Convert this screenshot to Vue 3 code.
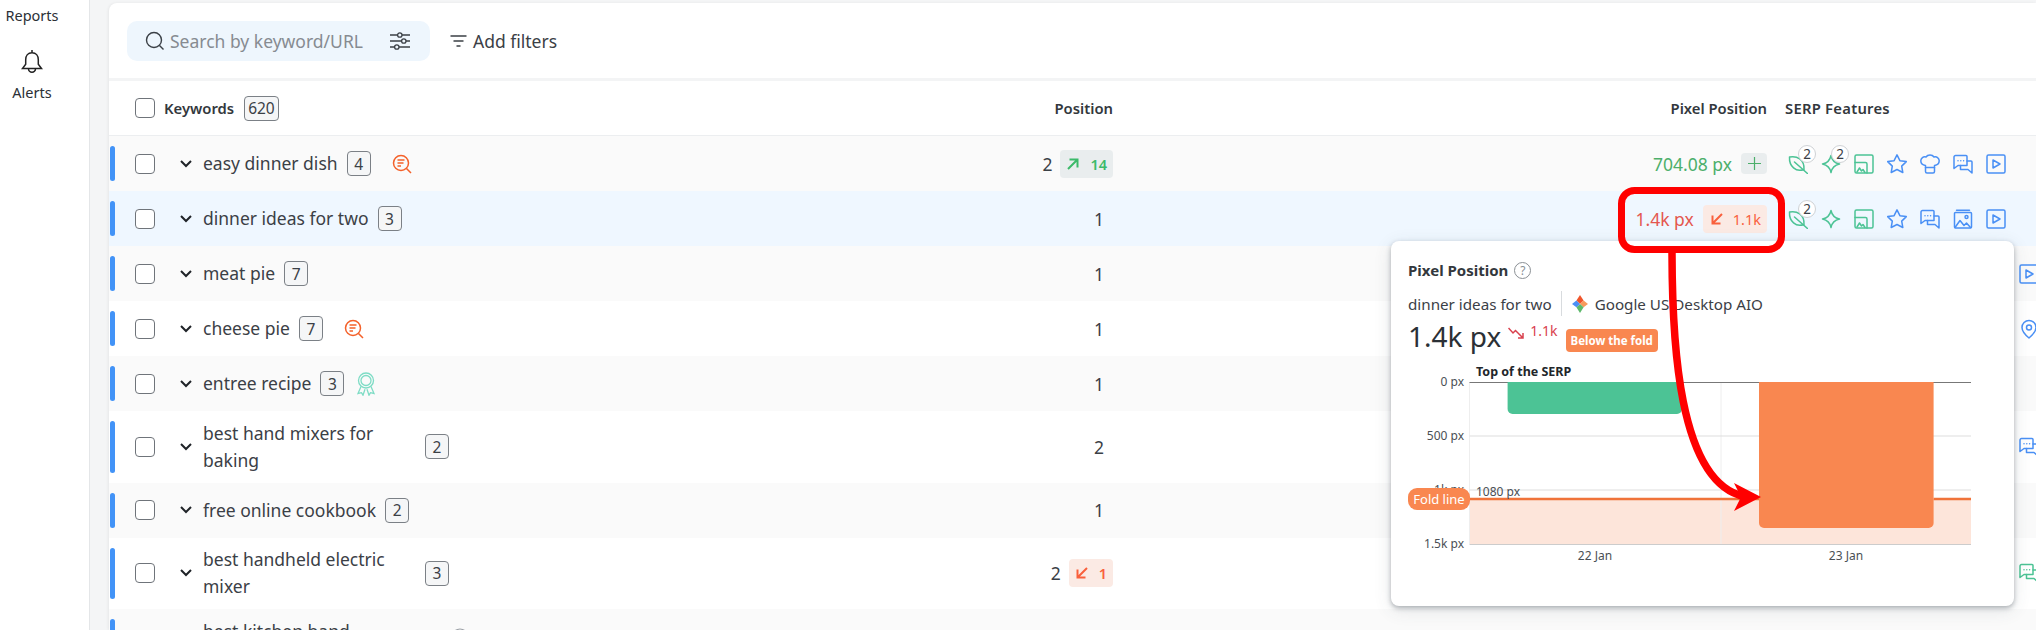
<script setup>
const box = 'M2.5 1h15A1.5 1.5 0 0 1 19 2.5v15a1.5 1.5 0 0 1-1.5 1.5h-15A1.5 1.5 0 0 1 1 17.5v-15A1.5 1.5 0 0 1 2.5 1z'

const icons = {
    leaf: ['M1.500 3C9 1.500 16.500 5.500 16 15.500 8 18.500 1 12.500 1.500 3z', 'M6.500 8L19.500 19.500'],
    spark: ['M10 1.500C11 6.500 13.500 9 18.500 10 13.500 11 11 13.500 10 18.500 9 13.500 6.500 11 1.500 10 6.500 9 9 6.500 10 1.500z'],
    image: [box, 'M1 8.500h10.500A1.500 1.500 0 0 1 13 10v9', 'M3 18l2.500-4 2 3 1.500-1.500 2 3'],
    star: ['M10 .8l2.900 5.900 6.400.9-4.600 4.500 1.100 6.400L10 15.500l-5.800 3 1.100-6.400L.7 7.600l6.400-.9z'],
    hat: [
        'M5.500 13.500v-2C2.500 11 .8 9 .8 6.800c0-2.800 2.600-4.600 5.200-3.800C6.900 1.600 8.300 1 10 1s3.100.6 4 2c2.600-.8 5.200 1 5.200 3.800 0 2.200-1.700 4.200-4.700 4.700v2z',
        'M5.500 13.500v4a1.500 1.500 0 0 0 1.500 1.500h6a1.500 1.500 0 0 0 1.500-1.500v-4',
    ],
    chat: [
        'M2.500 1.500h10.500a1 1 0 0 1 1 1v9H5L1 14.500V3a1.500 1.500 0 0 1 1.500-1.500z',
        'M14 7h4a1 1 0 0 1 1 1v11l-4-3.500H7.500v-4',
        'M5 6.800h.01M7.800 6.800h.01M10.600 6.800h.01',
    ],
    picture: [
        'M3.500 1.200h13',
        'M2.500 3.500h15a1 1 0 0 1 1 1V18a1 1 0 0 1-1 1h-15a1 1 0 0 1-1-1V4.500a1 1 0 0 1 1-1z',
        'M2 18.500l5-7 4 5 2.500-2.500 4 4.500',
        'M15 8a1.500 1.500 0 1 1-3 0 1.500 1.500 0 0 1 3 0z',
    ],
    play: [box, 'M7 6l7 4-7 4z'],
    pin: [
        'M10 1.500a7 7 0 0 1 7 7c0 4-4 8-7 10.500-3-2.500-7-6.500-7-10.500a7 7 0 0 1 7-7z',
        'M12.500 8.500a2.500 2.500 0 1 1-5 0 2.500 2.500 0 0 1 5 0z',
    ],
}

const greenIcons = ['leaf', 'spark', 'image']
const base = ['leaf', 'spark', 'image', 'star', 'chat', 'picture', 'play']

const rows = [
    {
        name: 'easy dinner dish', count: 4, pos: 2, note: 'search',
        delta: { dir: 'up', text: '14' },
        pixel: { text: '704.08 px', good: true },
        serp: ['leaf', 'spark', 'image', 'star', 'hat', 'chat', 'play'],
        badges: ['leaf', 'spark'],
    },
    {
        name: 'dinner ideas for two', count: 3, pos: 1, active: true,
        pixel: { text: '1.4k px', change: '1.1k' },
        serp: base, badges: ['leaf'],
    },
    { name: 'meat pie', count: 7, pos: 1, serp: [...base, 'play'] },
    { name: 'cheese pie', count: 7, pos: 1, note: 'search', serp: [...base, 'pin'] },
    { name: 'entree recipe', count: 3, pos: 1, note: 'ribbon', serp: [] },
    { name: 'best hand mixers for baking', count: 2, pos: 2, serp: [...base, 'chat'] },
    { name: 'free online cookbook', count: 2, pos: 1, serp: [] },
    {
        name: 'best handheld electric mixer', count: 3, pos: 2,
        delta: { dir: 'down', text: '1' },
        serp: [...base, 'chat'], greenLast: true,
    },
    { name: 'best kitchen hand\nmixer', count: 3, pos: 1, note: 'ring', fullWidth: true, serp: [] },
]

function iconColor(row, name, index) {
    if (greenIcons.includes(name)) return 'green'
    if (row.greenLast && index === 7) return 'green'
    return 'blue'
}
</script>

<template>
    <div class="page">
        <aside class="sidebar">
            <div class="nav-label reports">Reports</div>
            <svg class="bell" width="24" height="26" viewBox="0 0 24 26" fill="none" stroke="#222" stroke-width="1.500">
                <path d="M12 1v2.700M12 3.700c-4 0-6.300 3-6.300 7v4.500L2.500 19.500h19l-3.200-4.300V10.700c0-4-2.300-7-6.300-7z" />
                <path d="M8.500 19.700a3.500 3.500 0 0 0 7 0" />
            </svg>
            <div class="nav-label">Alerts</div>
        </aside>

        <main class="card">
            <div class="toolbar">
                <div class="search">
                    <svg width="20" height="20" viewBox="0 0 20 20" fill="none" stroke="#3b4046" stroke-width="1.400">
                        <circle cx="9" cy="9" r="7.500" />
                        <path d="M14.500 14.500L18.500 18.500" />
                    </svg>
                    <span class="search-text">Search by keyword/URL</span>
                    <svg class="sliders" width="20" height="18" viewBox="0 0 20 18" fill="none" stroke="#3b4046" stroke-width="1.300">
                        <path d="M0 3h7.500M12 3h8M0 9h11.500M16 9h4M0 15h4.500M9 15h11" />
                        <circle cx="9.800" cy="3" r="2.200" />
                        <circle cx="13.800" cy="9" r="2.200" />
                        <circle cx="6.800" cy="15" r="2.200" />
                    </svg>
                </div>
                <button class="add-filters">
                    <svg width="17" height="12" viewBox="0 0 17 12" fill="none" stroke="#3b4046" stroke-width="1.400">
                        <path d="M0.500 1h16M3.500 6h10M6.500 11h4" />
                    </svg>
                    Add filters
                </button>
            </div>

            <div class="table-head">
                <div class="head-left">
                    <span class="check"></span>
                    <span class="head-keywords">Keywords</span>
                    <span class="count head-count">620</span>
                    <span class="head-position">Position</span>
                </div>
                <span class="head-pixel">Pixel Position</span>
                <span class="head-serp">SERP Features</span>
            </div>

            <div v-for="row in rows" :key="row.name" class="row" :class="{ active: row.active }">
                <span class="bar"></span>
                <span class="check"></span>
                <svg class="chevron" width="12" height="8" viewBox="0 0 12 8" fill="none" stroke="#1f2328" stroke-width="2">
                    <path d="M1 1l5 5 5-5" />
                </svg>
                <div class="keyword">
                    <span class="keyword-text" :class="{ 'full-width': row.fullWidth }">{{ row.name }}</span>
                    <span class="count">{{ row.count }}</span>
                    <svg v-if="row.note === 'search'" class="note search-note" width="20" height="20" viewBox="0 0 20 20" fill="none" stroke="#f4612a" stroke-width="1.500">
                        <circle cx="9" cy="9" r="7.500" />
                        <path d="M14.500 14.500L19 19M5.500 6h7M5.500 9h6M5.500 12h3.500" />
                    </svg>
                    <svg v-if="row.note === 'ribbon'" class="note ribbon-note" width="20" height="24" viewBox="0 0 20 24" fill="none" stroke="#7edcc5" stroke-width="1.300">
                        <circle cx="10" cy="8.500" r="7.500" />
                        <circle cx="10" cy="8.500" r="5" />
                        <path d="M5 14.500L2 21.500l3.500-.8 1.500 2.500 2-6M15 14.500l3 7-3.500-.8-1.500 2.500-2-6" />
                    </svg>
                    <svg v-if="row.note === 'ring'" class="note ring-note" width="18" height="18" viewBox="0 0 18 18" fill="none" stroke="#9a9fa5" stroke-width="1.200">
                        <circle cx="9" cy="9" r="8" />
                    </svg>
                </div>
                <div class="position">
                    <span :class="{ plain: !row.delta }">{{ row.pos }}</span>
                    <span v-if="row.delta" class="delta" :class="row.delta.dir">
                        <svg width="12" height="12" viewBox="0 0 12 12" fill="none" stroke="currentColor" stroke-width="2">
                            <path v-if="row.delta.dir === 'up'" d="M1 11L10.500 1.500M2.500 1.500h8v8" />
                            <path v-else d="M11 1L1.500 10.500M1.500 2.500v8h8" />
                        </svg>
                        <span>{{ row.delta.text }}</span>
                    </span>
                </div>
                <div class="pixel">
                    <template v-if="row.pixel">
                        <span class="pixel-value" :class="row.pixel.good ? 'good' : 'bad'">{{ row.pixel.text }}</span>
                        <span v-if="row.pixel.good" class="pixel-plus">
                            <svg width="13" height="13" viewBox="0 0 13 13" fill="none" stroke="#4caf6b" stroke-width="1.200">
                                <path d="M6.500 0v13M0 6.500h13" />
                            </svg>
                        </span>
                        <span v-else class="delta down pixel-delta">
                            <svg width="12" height="12" viewBox="0 0 12 12" fill="none" stroke="currentColor" stroke-width="2">
                                <path d="M11 1L1.500 10.500M1.500 2.500v8h8" />
                            </svg>
                            <span>{{ row.pixel.change }}</span>
                        </span>
                    </template>
                </div>
                <div class="serp">
                    <span v-for="(name, index) in row.serp" :key="index" class="serp-icon">
                        <svg width="20" height="20" viewBox="0 0 20 20" fill="none" stroke-width="1.500" stroke-linejoin="round" :class="iconColor(row, name, index)">
                            <path v-for="d in icons[name]" :key="d" :d="d" />
                        </svg>
                        <span v-if="row.badges && row.badges.includes(name)" class="serp-badge">2</span>
                    </span>
                </div>
            </div>
        </main>

        <section class="popover">
            <div class="pop-title">
                Pixel Position
                <span class="help">?</span>
            </div>
            <div class="pop-sub">
                <span>dinner ideas for two</span>
                <span class="pop-divider"></span>
                <svg width="16" height="18" viewBox="0 0 16 18">
                    <path d="M8 0l3.600 5.400L8 9 4.400 5.400z" fill="#f0552b" />
                    <path d="M16 9l-4.400 3.200L8 9l3.600-3.600z" fill="#f79a5c" />
                    <path d="M8 18l-3.600-5.800L8 9l3.600 3.200z" fill="#5cb86a" />
                    <path d="M0 9l4.400-3.600L8 9l-3.600 3.200z" fill="#4a8ff5" />
                </svg>
                <span class="pop-engine">Google US Desktop AIO</span>
            </div>
            <div class="pop-value">
                <span class="pop-big">1.4k px</span>
                <svg class="pop-arrow" width="16" height="12" viewBox="0 0 16 12" fill="none" stroke="#d9414e" stroke-width="1.500">
                    <path d="M0.500 1l4.500 5 2.500-2.500 7 7M10 11h5V6" />
                </svg>
                <span class="pop-change">1.1k</span>
                <span class="fold-badge">Below the fold</span>
            </div>
            <svg class="chart" width="589" height="210" viewBox="0 0 589 210">
                <rect x="61.500" y="138" width="501.500" height="45" fill="#fde5da" />
                <path d="M61.500 21V183M313 21V183" stroke="#eeeeee" />
                <path d="M61.500 75H563M61.500 129H563" stroke="#dddddd" />
                <path d="M61.500 21.500H563" stroke="#777777" />
                <path d="M61.500 183.500H563" stroke="#cccccc" />
                <path d="M99.600 21H274V48a5 5 0 0 1-5 5H104.600a5 5 0 0 1-5-5z" fill="#4cc395" />
                <path d="M351 21H525.600V162a5 5 0 0 1-5 5H356a5 5 0 0 1-5-5z" fill="#f98750" />
                <path d="M61.500 138H351M525.600 138H563" stroke="#f0733a" stroke-width="2.500" />
                <text x="68" y="15" class="chart-top">Top of the SERP</text>
                <text x="56" y="25" class="chart-label" text-anchor="end">0 px</text>
                <text x="56" y="79" class="chart-label" text-anchor="end">500 px</text>
                <text x="56" y="133" class="chart-label" text-anchor="end">1k px</text>
                <text x="56" y="187" class="chart-label" text-anchor="end">1.5k px</text>
                <text x="68" y="135" class="chart-label">1080 px</text>
                <text x="187" y="199" class="chart-label" text-anchor="middle">22 Jan</text>
                <text x="438" y="199" class="chart-label" text-anchor="middle">23 Jan</text>
                <rect x="0" y="127" width="62" height="22" rx="9" fill="#f98750" />
                <text x="31" y="142.500" class="chart-fold" text-anchor="middle">Fold line</text>
            </svg>
        </section>

        <svg class="annotation" width="2036" height="630" viewBox="0 0 2036 630" fill="none">
            <rect x="1621.500" y="190.500" width="160" height="59" rx="13" stroke="#ff0000" stroke-width="7" />
            <path d="M1672 250C1672 340 1678 482 1744 496.500" stroke="#ff0000" stroke-width="7.500" />
            <path d="M1761 497L1734 483L1741 497L1734 511z" fill="#ff0000" />
        </svg>
    </div>
</template>

<style scoped>
.page {
    position: relative;
    display: flex;
    width: 2036px;
    height: 630px;
    overflow: hidden;
    background: #f4f5f6;
    font-family: "Noto Sans", sans-serif;
    color: #3b4046;
}
.sidebar {
    width: 64px;
    padding-right: 25px;
    flex-shrink: 0;
    display: flex;
    flex-direction: column;
    align-items: center;
    background: #fff;
    border-right: 1px solid #e4e6e8;
}
.nav-label {
    font-size: 14.500px;
    line-height: 20px;
    color: #2b3036;
}
.reports {
    margin-top: 5px;
    margin-bottom: 24px;
}
.bell {
    margin-bottom: 7px;
}
.card {
    flex: 1;
    min-width: 0;
    margin: 3px 0 0 19px;
    background: #fff;
    border-radius: 8px 0 0 0;
    box-shadow: -1px 0 3px rgba(0, 0, 0, 0.06);
}
.toolbar {
    display: flex;
    align-items: center;
    height: 78px;
    padding: 0 0 0 18px;
    box-sizing: border-box;
    border-bottom: 3px solid #f3f4f5;
}
.search {
    display: flex;
    align-items: center;
    width: 303px;
    height: 40px;
    box-sizing: border-box;
    padding: 0 20px 0 18px;
    background: #eef6fd;
    border-radius: 10px;
}
.search-text {
    margin-left: 5px;
    font-size: 17.500px;
    color: #868b91;
}
.sliders {
    margin-left: auto;
}
.add-filters {
    display: flex;
    align-items: center;
    gap: 6px;
    margin-left: 20px;
    padding: 0;
    border: 0;
    background: none;
    font: inherit;
    font-size: 17.500px;
    color: #3b4046;
}
.table-head {
    display: flex;
    align-items: center;
    height: 55px;
    padding-left: 26px;
    box-sizing: border-box;
    border-bottom: 1px solid #eceef0;
    font-size: 14.800px;
    font-weight: 600;
    color: #33383d;
}
.head-left {
    display: flex;
    align-items: center;
    width: 978px;
    flex-shrink: 0;
}
.head-keywords {
    margin-left: 9px;
}
.head-count {
    margin-left: 10px;
    min-width: 36px;
    font-weight: 400;
}
.head-position {
    margin-left: auto;
}
.head-pixel {
    width: 654px;
    flex-shrink: 0;
    text-align: right;
}
.head-serp {
    margin-left: 18px;
    letter-spacing: 0.250px;
    white-space: nowrap;
}
.check {
    display: block;
    flex-shrink: 0;
    width: 20px;
    height: 20px;
    box-sizing: border-box;
    border: 1px solid #6f747a;
    border-radius: 4px;
    background: #fff;
}
.row {
    display: flex;
    align-items: center;
    min-height: 55px;
}
.row:nth-of-type(odd) {
    background: #fafafa;
}
.row.active {
    background: #eff7ff;
}
.bar {
    align-self: stretch;
    flex-shrink: 0;
    width: 5px;
    margin: 10px 20px 10px 1px;
    border-radius: 3px;
    background: #4293f7;
}
.chevron {
    flex-shrink: 0;
    margin: 0 11px 0 25px;
}
.keyword {
    display: flex;
    align-items: center;
    gap: 9px;
    width: 697px;
    flex-shrink: 0;
    font-size: 17.500px;
}
.keyword-text {
    max-width: 213px;
    padding: 8.750px 0;
    line-height: 27px;
    white-space: pre-line;
}
.keyword-text.full-width {
    width: 213px;
}
.count {
    display: inline-flex;
    align-items: center;
    justify-content: center;
    flex-shrink: 0;
    box-sizing: border-box;
    min-width: 24px;
    height: 25px;
    padding: 0 3px;
    border: 1px solid #7b8086;
    border-radius: 4px;
    background: #f5f6f7;
    font-size: 15.500px;
    color: #3b4046;
}
.note {
    flex-shrink: 0;
}
.search-note {
    margin-left: 12px;
}
.ribbon-note {
    margin-left: 3px;
}
.ring-note {
    margin: 0 0 16px -7px;
}
.position {
    display: flex;
    align-items: center;
    justify-content: flex-end;
    gap: 8px;
    width: 213px;
    flex-shrink: 0;
    font-size: 17.500px;
}
.plain {
    margin-right: 9px;
}
.delta {
    display: inline-flex;
    align-items: center;
    gap: 11px;
    height: 28px;
    padding: 0 6px 0 7px;
    border-radius: 4px;
    font-size: 14.500px;
    font-weight: 600;
}
.delta.up {
    background: #e9edee;
    color: #3cba6a;
}
.delta.down {
    background: #fbeae4;
    color: #f9603c;
}
.pixel {
    display: flex;
    align-items: center;
    justify-content: flex-end;
    gap: 9px;
    width: 654px;
    flex-shrink: 0;
    font-size: 17.500px;
}
.good {
    color: #4caf6b;
}
.bad {
    color: #e4574f;
}
.pixel-plus {
    display: flex;
    align-items: center;
    justify-content: center;
    width: 26px;
    height: 21px;
    border-radius: 4px;
    background: #e9edee;
}
.pixel-delta {
    gap: 10px;
    padding: 0 6px 0 8px;
    font-weight: 400;
}
.serp {
    display: flex;
    gap: 13px;
    margin-left: 21px;
    flex-shrink: 0;
}
.serp-icon {
    position: relative;
    display: block;
    width: 20px;
    height: 20px;
}
.serp-icon svg {
    display: block;
    stroke-linecap: round;
}
.green {
    stroke: #4cc395;
}
.blue {
    stroke: #4a90f5;
}
.serp-badge {
    position: absolute;
    left: 10px;
    top: -9px;
    width: 18px;
    height: 18px;
    box-sizing: border-box;
    border: 1px solid #cfd2d5;
    border-radius: 50%;
    background: #fff;
    font-size: 13.500px;
    line-height: 16px;
    text-align: center;
    color: #3b4046;
}
.popover {
    position: absolute;
    left: 1391px;
    top: 241px;
    width: 623px;
    height: 365px;
    box-sizing: border-box;
    padding: 19px 17px 0;
    border-radius: 8px;
    background: #fff;
    box-shadow: 0 2px 5px rgba(60, 70, 80, 0.4), 0 4px 18px rgba(60, 70, 80, 0.12);
}
.pop-title {
    display: flex;
    align-items: center;
    gap: 6px;
    height: 20px;
    font-size: 15px;
    font-weight: 700;
    color: #33383d;
}
.help {
    width: 17px;
    height: 17px;
    box-sizing: border-box;
    border: 1px solid #8a8f94;
    border-radius: 50%;
    font-size: 12px;
    font-weight: 400;
    line-height: 15px;
    text-align: center;
    color: #8a8f94;
}
.pop-sub {
    display: flex;
    align-items: center;
    height: 25px;
    margin-top: 11px;
    font-size: 15.200px;
}
.pop-divider {
    width: 1px;
    height: 25px;
    margin: 0 10px 0 9px;
    background: #d8dbde;
}
.pop-sub svg {
    margin-right: 7px;
}
.pop-value {
    position: relative;
    display: flex;
    align-items: flex-start;
    height: 45px;
}
.pop-big {
    font-size: 28px;
    line-height: 40px;
    color: #2b3036;
}
.pop-arrow {
    margin: 11px 0 0 7px;
}
.pop-change {
    margin: 6px 0 0 6px;
    font-size: 14px;
    line-height: 18px;
    color: #d9414e;
}
.fold-badge {
    margin: 13px 0 0 8px;
    padding: 0 5px;
    height: 23px;
    border-radius: 4px;
    background: #f98750;
    font-size: 11.500px;
    font-weight: 700;
    line-height: 23px;
    color: #fff;
    white-space: nowrap;
}
.chart {
    display: block;
}
.chart-label {
    font-size: 12px;
    fill: #4a4f55;
}
.chart-top {
    font-size: 12.500px;
    font-weight: 700;
    fill: #22262a;
}
.chart-fold {
    font-size: 13px;
    fill: #fff;
}
.annotation {
    position: absolute;
    left: 0;
    top: 0;
    pointer-events: none;
}
</style>

<style>
html, body {
    margin: 0;
    overflow: hidden;
}
</style>
